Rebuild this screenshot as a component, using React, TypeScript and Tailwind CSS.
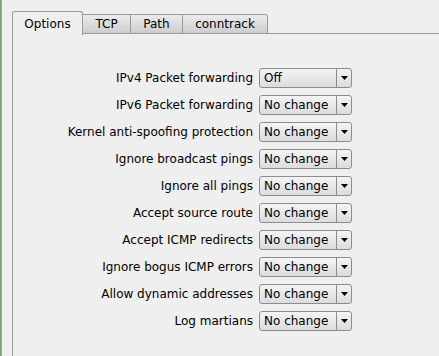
import React from 'react'

const rows: [string, string][] = [
  ['IPv4 Packet forwarding', 'Off'],
  ['IPv6 Packet forwarding', 'No change'],
  ['Kernel anti-spoofing protection', 'No change'],
  ['Ignore broadcast pings', 'No change'],
  ['Ignore all pings', 'No change'],
  ['Accept source route', 'No change'],
  ['Accept ICMP redirects', 'No change'],
  ['Ignore bogus ICMP errors', 'No change'],
  ['Allow dynamic addresses', 'No change'],
  ['Log martians', 'No change'],
]

const tabs = ['TCP', 'Path', 'conntrack']

function Combo({ value }: { value: string }) {
  return (
    <div className="flex h-[20px] w-[93px] rounded-[3px] border border-[#8c8c8c] bg-gradient-to-b from-[#f4f4f4] to-[#dcdcdf]">
      <div className="flex flex-1 items-center pl-[4px] text-[12px] text-black">{value}</div>
      <div className="flex w-[15px] items-center justify-center border-l border-[#8c8c8c]">
        <svg width="7" height="4" viewBox="0 0 7 4">
          <path d="M0 0h7L3.5 4z" fill="#000" />
        </svg>
      </div>
    </div>
  )
}

export default function App() {
  return (
    <div
      className="flex h-[356px] w-[439px] overflow-hidden bg-[#efefef]"
      style={{ fontFamily: '"DejaVu Sans", sans-serif' }}
    >
      <div className="w-[1px] bg-[#7f9a7f]" />
      <div className="w-[1px] bg-[#a6a6a6]" />
      <div className="flex flex-1 flex-col pl-[10px] pt-[11px]">
        {/* Tab bar */}
        <div className="flex items-end">
          <div className="z-10 -mb-[1px] flex h-[24px] w-[71px] items-center justify-center rounded-t-[3px] border border-b-0 border-[#9a9a9a] bg-[#efefef] text-[12px] text-black">
            Options
          </div>
          {tabs.map((t) => (
            <div
              key={t}
              className={`flex h-[20px] items-center justify-center border border-l-0 border-[#9a9a9a] bg-gradient-to-b from-[#ececec] to-[#cdcdd1] text-[12px] text-black ${
                t === 'TCP' ? 'w-[48px]' : t === 'Path' ? 'w-[52px]' : 'w-[85px] rounded-tr-[3px]'
              }`}
            >
              {t}
            </div>
          ))}
          <div className="h-[1px] flex-1 bg-[#9a9a9a]" />
        </div>

        {/* Panel */}
        <div className="flex-1 border-l border-[#9a9a9a]">
          <div className="grid grid-cols-[240px_93px] items-center gap-x-[6px] gap-y-[7px] pt-[34px]">
            {rows.map(([label, value]) => (
              <React.Fragment key={label}>
                <div className="text-right text-[12px] text-black">{label}</div>
                <Combo value={value} />
              </React.Fragment>
            ))}
          </div>
        </div>
      </div>
    </div>
  )
}
